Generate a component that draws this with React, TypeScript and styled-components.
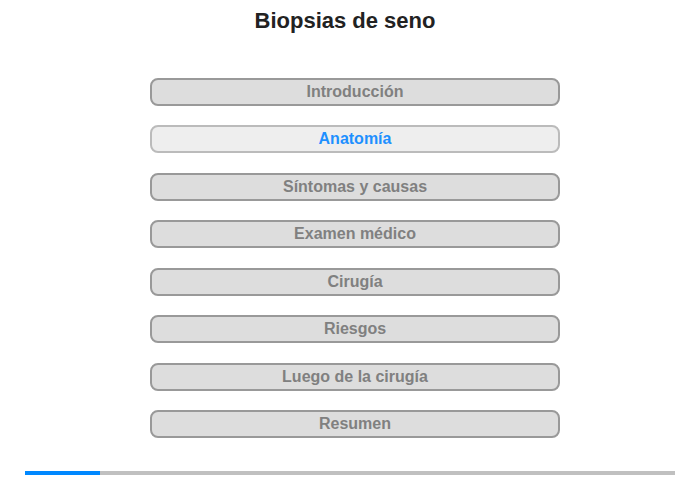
import React, { useState } from 'react';
import styled, { createGlobalStyle } from 'styled-components';

const GlobalStyle = createGlobalStyle`
    body {
        margin: 0;
        background: #fff;
        font-family: "Liberation Sans", Arial, sans-serif;
    }
`;

const Page = styled.div`
    width: 700px;
    height: 480px;
    padding-top: 8px;
    box-sizing: border-box;
    display: flex;
    flex-direction: column;
    align-items: center;
`;

const Title = styled.h1`
    margin: 0 10px 0 0;
    font-size: 22px;
    line-height: 26px;
    font-weight: bold;
    color: #222;
`;

const Menu = styled.nav`
    margin: 44px 0 0 10px;
    width: 410px;
    display: flex;
    flex-direction: column;
    gap: 19.43px;
`;

const Item = styled.button<{ $active?: boolean }>`
    height: 28px;
    width: 100%;
    box-sizing: border-box;
    border: 2px solid ${(p) => (p.$active ? '#bbbbbb' : '#999999')};
    border-radius: 8px;
    background: ${(p) => (p.$active ? '#eeeeee' : '#dddddd')};
    color: ${(p) => (p.$active ? '#1e90ff' : '#808080')};
    font-family: "Liberation Sans", Arial, sans-serif;
    font-size: 16px;
    font-weight: bold;
    padding: 0;
    cursor: pointer;
`;

const Progress = styled.div`
    margin-top: 33px;
    width: 650px;
    height: 4px;
    background: #c0c0c0;
    display: flex;
`;

const ProgressFill = styled.div`
    height: 100%;
    background: #0088ff;
`;

const sections = [
  'Introducción',
  'Anatomía',
  'Síntomas y causas',
  'Examen médico',
  'Cirugía',
  'Riesgos',
  'Luego de la cirugía',
  'Resumen',
];

function App() {
  const [active, setActive] = useState(1);
  return (
    <Page>
      <GlobalStyle />
      <Title>Biopsias de seno</Title>
      <Menu>
        {sections.map((s, i) => (
          <Item key={s} $active={i === active} onClick={() => setActive(i)}>
            {s}
          </Item>
        ))}
      </Menu>
      <Progress>
        <ProgressFill style={{ width: `${(75 / 650) * 100}%` }} />
      </Progress>
    </Page>
  );
}

export default App;
